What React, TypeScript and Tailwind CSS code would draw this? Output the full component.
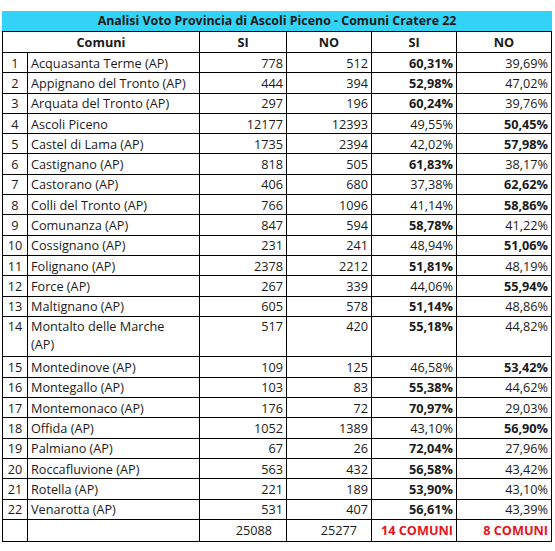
type Row = {
  n: number;
  comune: string;
  si: number;
  no: number;
  siPct: string;
  noPct: string;
};

const rows: Row[] = [
  { n: 1, comune: "Acquasanta Terme (AP)", si: 778, no: 512, siPct: "60,31%", noPct: "39,69%" },
  { n: 2, comune: "Appignano del Tronto (AP)", si: 444, no: 394, siPct: "52,98%", noPct: "47,02%" },
  { n: 3, comune: "Arquata del Tronto (AP)", si: 297, no: 196, siPct: "60,24%", noPct: "39,76%" },
  { n: 4, comune: "Ascoli Piceno", si: 12177, no: 12393, siPct: "49,55%", noPct: "50,45%" },
  { n: 5, comune: "Castel di Lama (AP)", si: 1735, no: 2394, siPct: "42,02%", noPct: "57,98%" },
  { n: 6, comune: "Castignano (AP)", si: 818, no: 505, siPct: "61,83%", noPct: "38,17%" },
  { n: 7, comune: "Castorano (AP)", si: 406, no: 680, siPct: "37,38%", noPct: "62,62%" },
  { n: 8, comune: "Colli del Tronto (AP)", si: 766, no: 1096, siPct: "41,14%", noPct: "58,86%" },
  { n: 9, comune: "Comunanza (AP)", si: 847, no: 594, siPct: "58,78%", noPct: "41,22%" },
  { n: 10, comune: "Cossignano (AP)", si: 231, no: 241, siPct: "48,94%", noPct: "51,06%" },
  { n: 11, comune: "Folignano (AP)", si: 2378, no: 2212, siPct: "51,81%", noPct: "48,19%" },
  { n: 12, comune: "Force (AP)", si: 267, no: 339, siPct: "44,06%", noPct: "55,94%" },
  { n: 13, comune: "Maltignano (AP)", si: 605, no: 578, siPct: "51,14%", noPct: "48,86%" },
  { n: 14, comune: "Montalto delle Marche (AP)", si: 517, no: 420, siPct: "55,18%", noPct: "44,82%" },
  { n: 15, comune: "Montedinove (AP)", si: 109, no: 125, siPct: "46,58%", noPct: "53,42%" },
  { n: 16, comune: "Montegallo (AP)", si: 103, no: 83, siPct: "55,38%", noPct: "44,62%" },
  { n: 17, comune: "Montemonaco (AP)", si: 176, no: 72, siPct: "70,97%", noPct: "29,03%" },
  { n: 18, comune: "Offida (AP)", si: 1052, no: 1389, siPct: "43,10%", noPct: "56,90%" },
  { n: 19, comune: "Palmiano (AP)", si: 67, no: 26, siPct: "72,04%", noPct: "27,96%" },
  { n: 20, comune: "Roccafluvione (AP)", si: 563, no: 432, siPct: "56,58%", noPct: "43,42%" },
  { n: 21, comune: "Rotella (AP)", si: 221, no: 189, siPct: "53,90%", noPct: "43,10%" },
  { n: 22, comune: "Venarotta (AP)", si: 531, no: 407, siPct: "56,61%", noPct: "43,39%" },
];

const cell = "border border-black px-[3px] leading-[18px] whitespace-nowrap";

export default function App() {
  return (
    <div className="bg-white pl-[2px] pt-[11px] font-['Open_Sans','Liberation_Sans',sans-serif] text-[12.7px] text-[#1a1a1a]">
      <div className="flex h-[20px] w-[550px] items-center justify-center bg-[#33d3f7] text-[12.4px] font-bold">
        Analisi Voto Provincia di Ascoli Piceno - Comuni Cratere 22
      </div>
      <table className="w-[549px] table-fixed border-collapse">
        <colgroup>
          <col className="w-[25px]" />
          <col className="w-[172px]" />
          <col className="w-[87px]" />
          <col className="w-[85px]" />
          <col className="w-[85px]" />
          <col className="w-[95px]" />
        </colgroup>
        <thead>
          <tr className="h-[21px] font-bold">
            <th colSpan={2} className={cell}>Comuni</th>
            <th className={cell}>SI</th>
            <th className={cell}>NO</th>
            <th className={cell}>SI</th>
            <th className={cell}>NO</th>
          </tr>
        </thead>
        <tbody>
          {rows.map((r) => {
            const siWins = parseFloat(r.siPct.replace(",", ".")) > 50;
            const tall = r.n === 14;
            return (
              <tr key={r.n} className={tall ? "h-[40.6px] align-top" : "h-[20.3px]"}>
                <td className={`${cell} text-center`}>{r.n}</td>
                <td className={cell}>
                  {tall ? (
                    <>
                      Montalto delle Marche
                      <br />
                      (AP)
                    </>
                  ) : (
                    r.comune
                  )}
                </td>
                <td className={`${cell} text-right`}>{r.si}</td>
                <td className={`${cell} text-right`}>{r.no}</td>
                <td className={`${cell} text-right ${siWins ? "font-bold" : ""}`}>{r.siPct}</td>
                <td className={`${cell} text-right ${siWins ? "" : "font-bold"}`}>{r.noPct}</td>
              </tr>
            );
          })}
          <tr className="h-[22px]">
            <td className={cell}></td>
            <td className={cell}></td>
            <td className={`${cell} pr-[14px] text-right`}>25088</td>
            <td className={`${cell} pr-[14px] text-right`}>25277</td>
            <td className={`${cell} text-right font-bold text-[#e8141c]`}>14 COMUNI</td>
            <td className={`${cell} text-right font-bold text-[#e8141c]`}>8 COMUNI</td>
          </tr>
        </tbody>
      </table>
    </div>
  );
}
